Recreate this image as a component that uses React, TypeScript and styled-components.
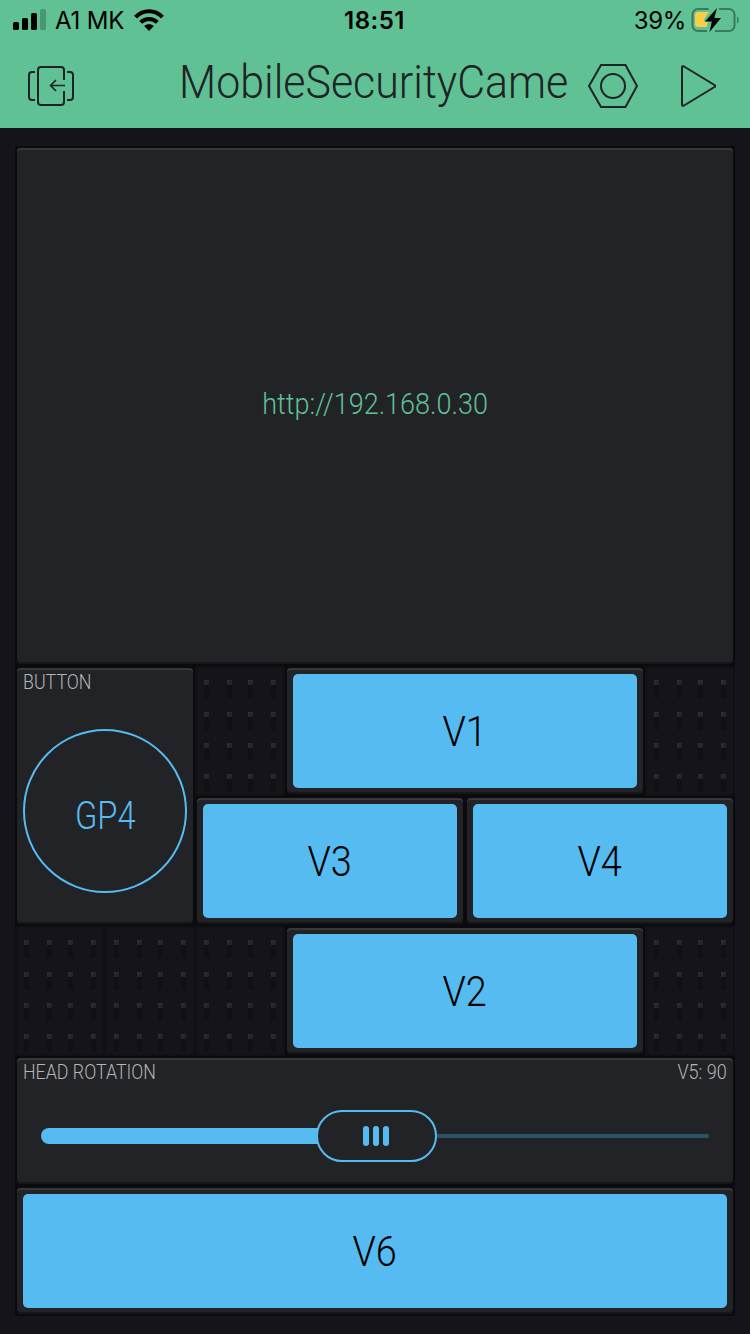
import React from "react";
import styled, { createGlobalStyle } from "styled-components";

const GlobalStyle = createGlobalStyle`
  * { box-sizing: border-box; }
  body { margin: 0; background: #15141a; }
`;

const BLUE = "#56bbf1";
const INK = "#1f2226";
const uiFont = `Roboto, "Liberation Sans", sans-serif`;
const systemFont = `Inter, "Liberation Sans", sans-serif`;

const Screen = styled.main`
  width: 750px;
  height: 1334px;
  overflow: hidden;
  display: flex;
  flex-direction: column;
  background: linear-gradient(#18171c, #15141a 80px, #15141a);
  font-family: ${uiFont};
  font-weight: 300;
`;

const Header = styled.header`
  height: 128px;
  flex: none;
  background: #5fc194;
`;

const StatusBar = styled.div`
  height: 40px;
  display: grid;
  grid-template-columns: 1fr auto 1fr;
  align-items: center;
  padding: 0 11px 0 13px;
  font-family: ${systemFont};
  font-size: 24px;
  font-weight: 400;
  line-height: 38px;
  color: #000;
`;

const StatusGroup = styled.div<{ $end?: boolean }>`
  display: flex;
  align-items: center;
  justify-content: ${(p) => (p.$end ? "flex-end" : "flex-start")};
  svg { flex: none; display: block; }
`;

const Fit = styled.span<{ $scale?: number; $origin?: string }>`
  display: inline-block;
  white-space: nowrap;
  transform: scaleX(${(p) => p.$scale ?? 1});
  transform-origin: ${(p) => p.$origin ?? "center"};
`;

const Carrier = styled.span`
  margin: 0 10px 0 9px;
  padding-top: 2px;
  letter-spacing: -0.2px;
`;

const Clock = styled.span`
  padding-top: 2px;
  margin-right: 3px;
  font-weight: 600;
  letter-spacing: 0.5px;
`;

const Percent = styled.span`
  padding-top: 2px;
  margin-right: 5px;
  letter-spacing: -0.3px;
`;

const NavBar = styled.div`
  height: 88px;
  display: flex;
  align-items: center;
  padding: 4px 32px 0 28px;
  svg { flex: none; display: block; }
`;

const Title = styled.h1`
  margin: -9px 21px 0 105px;
  width: 388px;
  font-size: 46px;
  font-weight: 300;
  line-height: 60px;
  color: ${INK};
`;

const PlaySlot = styled.span`
  margin-left: 42px;
`;

const Board = styled.section`
  display: grid;
  grid-template-columns: repeat(8, 90px);
  grid-template-rows: repeat(9, 130px);
  margin: 18px 15px 0;
`;

const Cell = styled.div<{ $col: number; $row: number; $w: number; $h: number }>`
  grid-column: ${(p) => p.$col} / span ${(p) => p.$w};
  grid-row: ${(p) => p.$row} / span ${(p) => p.$h};
  padding: 2px;
  background: #0b0b0e;
  display: flex;
`;

const Tile = styled.div`
  flex: 1;
  min-width: 0;
  border-radius: 4px;
  background: #222327;
  box-shadow: inset 0 2px 0 #37383a, inset 0 -2px 0 #151619;
  display: flex;
  flex-direction: column;
  padding: 6px;
`;

const Stream = styled.div`
  flex: 1;
  display: flex;
  align-items: center;
  justify-content: center;
  padding-bottom: 4px;
  font-size: 29px;
  line-height: 40px;
  color: #5fc194;
`;

const PushButton = styled.button`
  flex: 1;
  border: 0;
  border-radius: 5px;
  background: ${BLUE};
  color: #000;
  font: 300 42px/50px ${uiFont};
  padding: 2px 0 0;
`;

const LabelRow = styled.div`
  display: flex;
  justify-content: space-between;
  height: 20px;
  margin-top: -2px;
  font-size: 20px;
  line-height: 20px;
  color: #b4b5b7;
`;

const RoundButton = styled.button`
  width: 164px;
  height: 164px;
  margin-top: 37px;
  padding: 9px 0 0;
  border: 2px solid ${BLUE};
  border-radius: 50%;
  background: none;
  color: ${BLUE};
  font: 300 38px/46px ${uiFont};
`;

const Slider = styled.div`
  flex: 1;
  display: flex;
  align-items: center;
  margin: 12px 18px 0;
`;

const Filled = styled.div`
  width: 277px;
  height: 16px;
  border-radius: 8px 0 0 8px;
  background: ${BLUE};
`;

const Thumb = styled.div`
  width: 121px;
  height: 52px;
  margin-left: -2px;
  padding-right: 2px;
  border: 2px solid ${BLUE};
  border-radius: 26px;
  display: flex;
  align-items: center;
  justify-content: center;
  gap: 4px;
`;

const Grip = styled.i`
  width: 6px;
  height: 20px;
  border-radius: 3px;
  background: ${BLUE};
`;

const Rest = styled.div`
  flex: 1;
  height: 4px;
  border-radius: 0 2px 2px 0;
  background: #2c5468;
`;

const EmptyCell = styled.div<{ $col: number; $row: number }>`
  grid-column: ${(p) => p.$col};
  grid-row: ${(p) => p.$row};
  display: grid;
  grid-template-columns: 23px 21px 23px 5px;
  grid-template-rows: 32px 31px 31px 18px;
  padding: 14px 0 0 9px;
  background: #15141a;
  box-shadow: inset 0 0 0 2px #111014;
`;

const Peg = styled.i`
  width: 5px;
  height: 18px;
  background:
    linear-gradient(135deg, #303032, #202023) 0 0 / 5px 5px no-repeat,
    #111115;
`;

function Empty({ col, row }: { col: number; row: number }) {
  return (
    <EmptyCell $col={col} $row={row}>
      {Array.from({ length: 16 }, (_, i) => <Peg key={i} />)}
    </EmptyCell>
  );
}

const pushButtons = [
  { name: "V1", col: 4, row: 5, w: 4 },
  { name: "V3", col: 3, row: 6, w: 3 },
  { name: "V4", col: 6, row: 6, w: 3 },
  { name: "V2", col: 4, row: 7, w: 4 },
  { name: "V6", col: 1, row: 9, w: 8 },
];

const emptyCells = [[3, 5], [8, 5], [1, 7], [2, 7], [3, 7], [8, 7]];

function SignalIcon() {
  return (
    <svg width="33" height="22" viewBox="0 0 33 22">
      <rect x="0" y="13" width="6" height="8" rx="1.6" />
      <rect x="9" y="9" width="6" height="12" rx="1.6" />
      <rect x="18" y="4" width="6" height="17" rx="1.6" />
      <rect x="27" y="0" width="6" height="21" rx="1.6" opacity=".22" />
    </svg>
  );
}

function WifiIcon() {
  return (
    <svg width="30" height="22" viewBox="0 0 30 22">
      <g fill="none" stroke="#000" strokeWidth="4">
        <path d="M1.6 8.2C9.2.4 20.8.4 28.4 8.2" />
        <path d="M6.7 13.4c4.7-4.7 11.9-4.7 16.6 0" />
      </g>
      <path d="M10.1 17.1c2.9-2.6 6.9-2.6 9.8 0L15 22z" />
    </svg>
  );
}

function BatteryIcon() {
  return (
    <svg width="48" height="24" viewBox="0 0 48 24">
      <g fill="none" stroke="#397a5c" strokeWidth="2">
        <path d="M17.5 1H7a5.500 5.500 0 0 0-5.500 5.500v11A5.500 5.500 0 0 0 7 23h9" />
        <path d="M28 1h10a5.500 5.500 0 0 1 5.500 5.500v11A5.500 5.500 0 0 1 38 23H24" />
      </g>
      <path d="M46 8.500c2.200 1.200 2.200 5.800 0 7z" fill="#397a5c" />
      <path d="M7 4h11l-5 7.500c-.5 1.500.3 2.500 2 2.500h2l-1.500 5H7a3 3 0 0 1-3-3V7a3 3 0 0 1 3-3z" fill="#f8cf46" />
      <path d="M26 0 14 13.500h6.800L18.500 24 30 10h-6.700z" />
    </svg>
  );
}

function ExitIcon() {
  return (
    <svg width="46" height="40" viewBox="0 0 46 40" fill="none" stroke={INK} strokeWidth="2" strokeLinejoin="round">
      <path d="M36 14V4a3 3 0 0 0-3-3H13a3 3 0 0 0-3 3v32a3 3 0 0 0 3 3h20a3 3 0 0 0 3-3V25" />
      <path d="M7 6H4a3 3 0 0 0-3 3v22a3 3 0 0 0 3 3h3M39 6h3a3 3 0 0 1 3 3v22a3 3 0 0 1-3 3h-3" />
      <path d="M37 19.500H23M28 14l-5.500 5.500L28 25" strokeWidth="1.700" />
    </svg>
  );
}

function NutIcon() {
  return (
    <svg width="50" height="44" viewBox="0 0 50 44" fill="none" stroke={INK} strokeWidth="2">
      <path d="M13 1h24.500L49 22 37.500 43H13L1 22z" />
      <circle cx="25" cy="22" r="12" />
    </svg>
  );
}

function PlayIcon() {
  return (
    <svg width="36" height="42" viewBox="0 0 36 42" fill="none" stroke={INK} strokeWidth="2" strokeLinejoin="round">
      <path d="M2 2.500v37q0 2 2 1L34.500 22q1.600-1 0-2L4 1.500q-2-1-2 1z" />
    </svg>
  );
}

export default function App() {
  return (
    <Screen>
      <GlobalStyle />
      <Header>
        <StatusBar>
          <StatusGroup>
            <SignalIcon />
            <Carrier>A1 MK</Carrier>
            <WifiIcon />
          </StatusGroup>
          <Clock>18:51</Clock>
          <StatusGroup $end>
            <Percent>39%</Percent>
            <BatteryIcon />
          </StatusGroup>
        </StatusBar>
        <NavBar>
          <ExitIcon />
          <Title><Fit $origin="left" $scale={0.933}>MobileSecurityCame</Fit></Title>
          <NutIcon />
          <PlaySlot><PlayIcon /></PlaySlot>
        </NavBar>
      </Header>
      <Board>
        <Cell $col={1} $row={1} $w={8} $h={4}>
          <Tile><Stream><Fit $scale={0.932}>http://192.168.0.30</Fit></Stream></Tile>
        </Cell>
        <Cell $col={1} $row={5} $w={2} $h={2}>
          <Tile>
            <LabelRow><Fit $origin="left" $scale={0.89}>BUTTON</Fit></LabelRow>
            <RoundButton><Fit $scale={0.86}>GP4</Fit></RoundButton>
          </Tile>
        </Cell>
        {pushButtons.map((b) => (
          <Cell key={b.name} $col={b.col} $row={b.row} $w={b.w} $h={1}>
            <Tile><PushButton><Fit $scale={0.9}>{b.name}</Fit></PushButton></Tile>
          </Cell>
        ))}
        {emptyCells.map(([col, row]) => <Empty key={`${col}-${row}`} col={col} row={row} />)}
        <Cell $col={1} $row={8} $w={8} $h={1}>
          <Tile>
            <LabelRow>
              <Fit $origin="left" $scale={0.89}>HEAD ROTATION</Fit>
              <Fit $origin="right" $scale={0.9}>V5: 90</Fit>
            </LabelRow>
            <Slider>
              <Filled />
              <Thumb><Grip /><Grip /><Grip /></Thumb>
              <Rest />
            </Slider>
          </Tile>
        </Cell>
      </Board>
    </Screen>
  );
}
